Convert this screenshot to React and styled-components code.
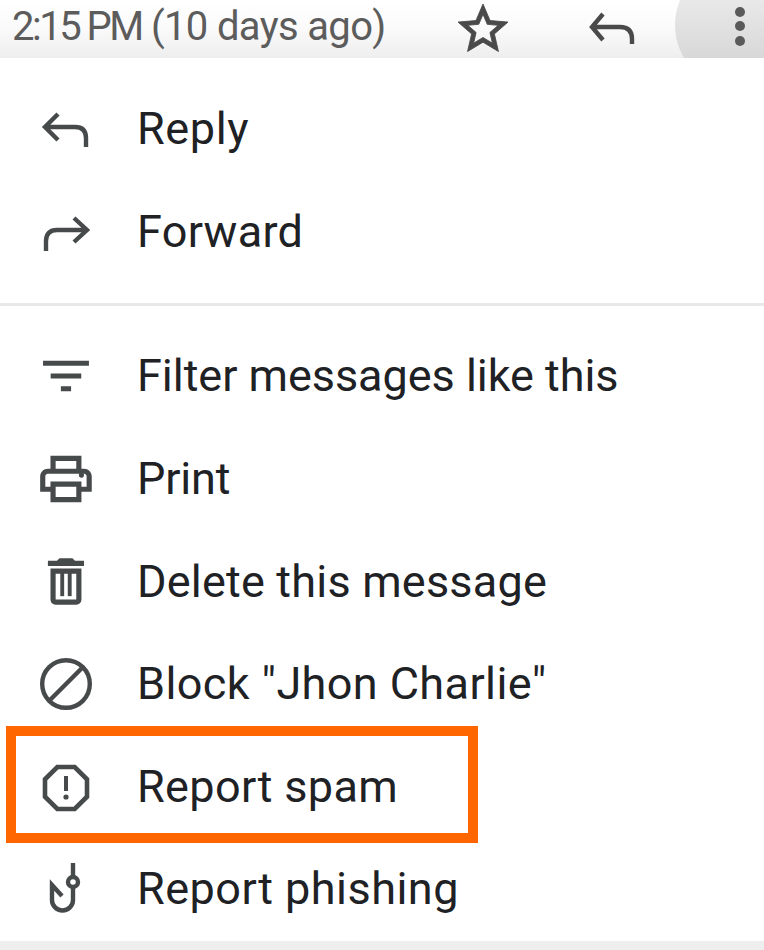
import React from "react";
import styled, { createGlobalStyle } from "styled-components";

const GlobalStyle = createGlobalStyle`
  html, body {
    margin: 0;
    padding: 0;
    background: #fff;
  }
`;

const Page = styled.div`
  width: 764px;
  height: 950px;
  display: flex;
  flex-direction: column;
  overflow: hidden;
  font-family: Roboto, "Liberation Sans", sans-serif;
`;

const Header = styled.header`
  position: relative;
  flex: none;
  height: 58px;
  display: flex;
  align-items: center;
  padding-left: 12px;
  box-sizing: border-box;
  overflow: hidden;
  background: linear-gradient(#ffffff 0%, #fbfbfb 45%, #eeeeee 100%);
`;

const Timestamp = styled.span`
  width: 441px;
  flex: none;
  margin-top: -4px;
  font-size: 40px;
  line-height: 44px;
  letter-spacing: -0.65px;
  color: #5c5c5c;
  white-space: nowrap;
`;

const Clock = styled.span`
  letter-spacing: -2.5px;
`;

const HeaderIcon = styled.svg`
  flex: none;
  display: block;
  color: #4a4a4a;
`;

const StarIcon = styled(HeaderIcon)`
  width: 60px;
  height: 60px;
  margin-top: -1px;
  overflow: visible;
`;

const ReplyIcon = styled(HeaderIcon)`
  width: 50px;
  height: 34px;
  margin-left: 73px;
  margin-top: -3px;
`;

const MoreButton = styled.div`
  position: absolute;
  left: 675px;
  top: -40px;
  width: 130px;
  height: 130px;
  border-radius: 50%;
  background: linear-gradient(#e9e9e9 30%, #d8d8d8 75%);
`;

const Dot = styled.span`
  position: absolute;
  left: 60px;
  top: ${(p) => p.$top}px;
  width: 10px;
  height: 10px;
  border-radius: 50%;
  background: #5a5a5a;
`;

const Menu = styled.div`
  flex: 1;
  display: flex;
  flex-direction: column;
  background: #fff;
`;

const Section = styled.div`
  padding: ${(p) => p.$pad};
`;

const Divider = styled.div`
  height: 3px;
  background: #e8e8e8;
`;

const Row = styled.div`
  position: relative;
  height: 102.6px;
  display: flex;
  align-items: center;
  padding-left: 35px;
`;

const Icon = styled.svg`
  flex: none;
  width: 62px;
  height: 62px;
  color: #474a4b;
  display: block;
`;

const Label = styled.span`
  margin-left: 40px;
  font-size: 45px;
  line-height: 52px;
  letter-spacing: ${(p) => p.$track}px;
  color: #202124;
  white-space: nowrap;
`;

const Highlight = styled.div`
  position: absolute;
  left: 6px;
  top: -10px;
  width: 472px;
  height: 117px;
  box-sizing: border-box;
  border: 10px solid #ff6600;
`;

const Footer = styled.div`
  flex: none;
  height: 10px;
  background: #eeeeee;
`;

const ICONS = {
  reply: (
    <path
      d="M23 16L10 29L23 42M10 29H40Q51 29 51 40V49"
      fill="none"
      stroke="currentColor"
      strokeWidth="4.4"
    />
  ),
  forward: (
    <path
      d="M39 17L52 29L39 41M52 29H22Q11 29 11 40V50"
      fill="none"
      stroke="currentColor"
      strokeWidth="4.4"
    />
  ),
  filter: (
    <path
      transform="scale(2.55) translate(.15 .15)"
      fill="currentColor"
      d="M10 18h4v-2h-4v2zM3 6v2h18V6H3zm3 7h12v-2H6v2z"
    />
  ),
  print: (
    <g transform="scale(2.58)" fill="currentColor">
      <path d="M19 8h-1V3H6v5H5c-1.66 0-3 1.34-3 3v6h4v4h12v-4h4v-6c0-1.66-1.34-3-3-3zM8 5h8v3H8V5zm8 12v2H8v-4h8v2zm2-2v-2H6v2H4v-4c0-.55.45-1 1-1h14c.55 0 1 .45 1 1v4h-2z" />
      <circle cx="18" cy="10.5" r="1" />
    </g>
  ),
  trash: (
    <g transform="scale(2.58)" fill="currentColor">
      <path d="M16 9v10H8V9h8m-1.500-6h-5l-1 1H5v2h14V4h-3.500l-1-1zM18 7H6v12c0 1.100.9 2 2 2h8c1.100 0 2-.9 2-2V7z" transform="translate(0 -.2)" />
      <rect x="9.800" y="8.500" width="1.500" height="9" />
      <rect x="12.700" y="8.500" width="1.500" height="9" />
    </g>
  ),
  block: (
    <g fill="none" stroke="currentColor" strokeWidth="4.400">
      <circle cx="31" cy="31" r="23.800" />
      <path d="M14 48L48 14" />
    </g>
  ),
  spam: (
    <g>
      <polygon
        points="22.300,11 39.700,11 52,23.300 52,40.700 39.700,53 22.300,53 10,40.700 10,23.300"
        fill="none"
        stroke="currentColor"
        strokeWidth="4.600"
      />
      <rect x="29" y="20" width="4" height="15" fill="currentColor" />
      <circle cx="31" cy="41" r="2.600" fill="currentColor" />
    </g>
  ),
  hook: (
    <g fill="none" stroke="currentColor" strokeWidth="4.400">
      <path d="M38 5V19" />
      <circle cx="38" cy="24" r="5" />
      <path d="M38 29V42A10.500 10.500 0 0 1 17 42V27L27 38" />
    </g>
  ),
};

const ITEMS_TOP = [
  { icon: "reply", label: "Reply", track: 0.6 },
  { icon: "forward", label: "Forward", track: 0.3 },
];

const ITEMS_BOTTOM = [
  { icon: "filter", label: "Filter messages like this", track: -0.04 },
  { icon: "print", label: "Print", track: -0.2 },
  { icon: "trash", label: "Delete this message", track: 0.2 },
  { icon: "block", label: 'Block "Jhon Charlie"', track: 0.4 },
  { icon: "spam", label: "Report spam", track: 0.36, marked: true },
  { icon: "hook", label: "Report phishing", track: 0.47 },
];

const MenuRow = ({ icon, label, track, marked }) => (
  <Row>
    <Icon viewBox="0 0 62 62">{ICONS[icon]}</Icon>
    <Label $track={track}>{label}</Label>
    {marked && <Highlight />}
  </Row>
);

const App = () => (
  <Page>
    <GlobalStyle />
    <Header>
      <Timestamp>
        <Clock>2:15 PM</Clock> (10 days ago)
      </Timestamp>
      <StarIcon viewBox="0 0 24 24">
        <path
          fill="currentColor"
          stroke="currentColor"
          strokeWidth="0.35"
          d="M22 9.240l-7.190-.620L12 2 9.190 8.630 2 9.240l5.460 4.730L5.820 21 12 17.270 18.180 21l-1.630-7.030L22 9.240zM12 15.400l-3.760 2.270 1-4.280-3.320-2.880 4.380-.380L12 6.100l1.710 4.040 4.380.380-3.320 2.880 1 4.280L12 15.400z"
        />
      </StarIcon>
      <ReplyIcon viewBox="0 0 50 34">
        <path
          d="M17 3L6 16L17 29M6 16H34Q46 16 46 28V33"
          fill="none"
          stroke="currentColor"
          strokeWidth="4.400"
        />
      </ReplyIcon>
      <MoreButton>
        <Dot $top={47} />
        <Dot $top={61} />
        <Dot $top={76} />
      </MoreButton>
    </Header>
    <Menu>
      <Section $pad="20px 0 20px">
        {ITEMS_TOP.map((item) => (
          <MenuRow key={item.label} {...item} />
        ))}
      </Section>
      <Divider />
      <Section $pad="19px 0 0">
        {ITEMS_BOTTOM.map((item) => (
          <MenuRow key={item.label} {...item} />
        ))}
      </Section>
    </Menu>
    <Footer />
  </Page>
);

export default App;
